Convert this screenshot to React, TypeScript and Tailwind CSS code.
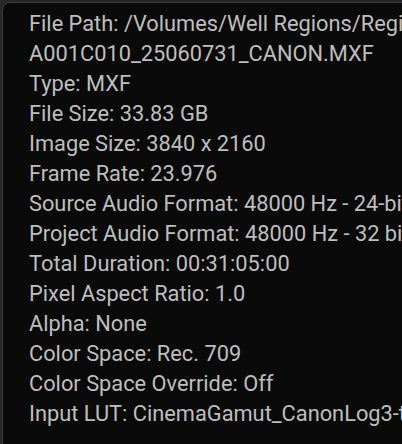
import React from "react";

const lines = [
  "File Path: /Volumes/Well Regions/Regions/",
  "A001C010_25060731_CANON.MXF",
  "Type: MXF",
  "File Size: 33.83 GB",
  "Image Size: 3840 x 2160",
  "Frame Rate: 23.976",
  "Source Audio Format: 48000 Hz - 24-bit - Stereo",
  "Project Audio Format: 48000 Hz - 32 bit floating point",
  "Total Duration: 00:31:05:00",
  "Pixel Aspect Ratio: 1.0",
  "Alpha: None",
  "Color Space: Rec. 709",
  "Color Space Override: Off",
  "Input LUT: CinemaGamut_CanonLog3-to-BT709_WideDR",
];

export default function App() {
  return (
    <div className="w-[402px] h-[444px] bg-[#282828] overflow-hidden pl-[2px] pt-[2px]">
      <div className="w-[420px] h-[460px] bg-[#0a0a0a] border border-[#3c3c3c] rounded-tl-[8px] pl-[26px] pt-[6px]">
        <div className="flex flex-col text-[#bebebe] text-[21.8px] leading-[30px] whitespace-nowrap font-['Roboto',sans-serif]">
          {lines.map((l) => (
            <div key={l}>{l}</div>
          ))}
        </div>
      </div>
    </div>
  );
}
